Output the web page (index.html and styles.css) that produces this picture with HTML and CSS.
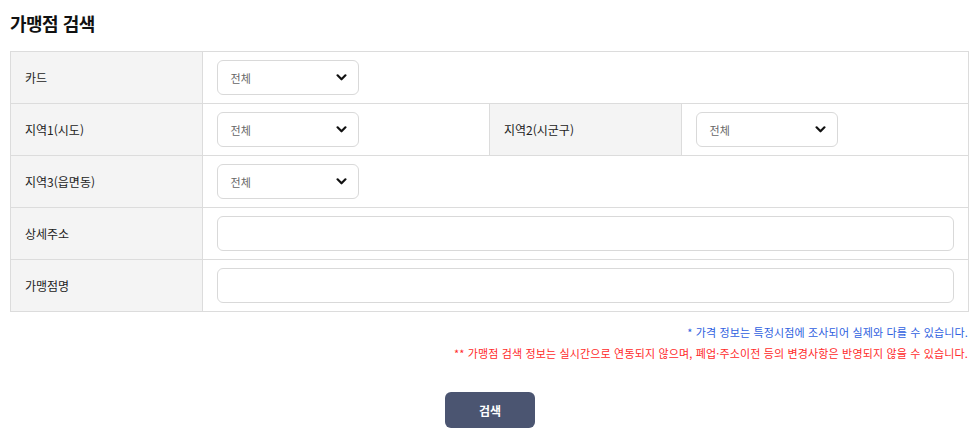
FILE: index.html
```html
<!DOCTYPE html>
<html lang="ko">
<head>
<meta charset="utf-8">
<link rel="stylesheet" href="styles.css">
</head>
<body>
<div class="page">
  <h2 class="title">가맹점 검색</h2>
  <table class="form">
    <colgroup><col class="c-lab"><col class="c-val"><col class="c-lab2"><col class="c-val"></colgroup>
    <tr>
      <th>카드</th>
      <td colspan="3"><div class="select"><span>전체</span><svg class="chev" viewBox="0 0 12 8" width="11" height="7"><path d="M1.5 1.5 L6 6 L10.5 1.5" fill="none" stroke="#111" stroke-width="2.5" stroke-linecap="round" stroke-linejoin="round"/></svg></div></td>
    </tr>
    <tr>
      <th>지역1(시도)</th>
      <td><div class="select"><span>전체</span><svg class="chev" viewBox="0 0 12 8" width="11" height="7"><path d="M1.5 1.5 L6 6 L10.5 1.5" fill="none" stroke="#111" stroke-width="2.5" stroke-linecap="round" stroke-linejoin="round"/></svg></div></td>
      <th>지역2(시군구)</th>
      <td><div class="select"><span>전체</span><svg class="chev" viewBox="0 0 12 8" width="11" height="7"><path d="M1.5 1.5 L6 6 L10.5 1.5" fill="none" stroke="#111" stroke-width="2.5" stroke-linecap="round" stroke-linejoin="round"/></svg></div></td>
    </tr>
    <tr>
      <th>지역3(읍면동)</th>
      <td colspan="3"><div class="select"><span>전체</span><svg class="chev" viewBox="0 0 12 8" width="11" height="7"><path d="M1.5 1.5 L6 6 L10.5 1.5" fill="none" stroke="#111" stroke-width="2.5" stroke-linecap="round" stroke-linejoin="round"/></svg></div></td>
    </tr>
    <tr>
      <th>상세주소</th>
      <td colspan="3"><div class="input"></div></td>
    </tr>
    <tr>
      <th>가맹점명</th>
      <td colspan="3"><div class="input"></div></td>
    </tr>
  </table>
  <p class="note blue">* 가격 정보는 특정시점에 조사되어 실제와 다를 수 있습니다.</p>
  <p class="note red">** 가맹점 검색 정보는 실시간으로 연동되지 않으며, 폐업·주소이전 등의 변경사항은 반영되지 않을 수 있습니다.</p>
  <div class="actions"><button class="btn">검색</button></div>
</div>
</body>
</html>
```
FILE: styles.css
```css
html, body { margin: 0; padding: 0; background: #fff; }
body { font-family: "Noto Sans CJK KR", "Noto Sans", sans-serif; color: #222; }
.page { padding: 0 9px 0 10px; }
.title { margin: 0; padding-top: 10px; height: 51px; box-sizing: border-box; font-size: 18px; font-weight: 700; line-height: 26px; color: #111; letter-spacing: -0.5px; }
.form { width: 100%; border-collapse: collapse; table-layout: fixed; }
.c-lab { width: 20%; }
.c-lab2 { width: 20%; }
.c-val { width: 30%; }
.form th, .form td { border: 1px solid #dcdcdc; height: 52px; box-sizing: border-box; padding: 0 14px; vertical-align: middle; }
.form th { background: #f4f4f4; text-align: left; font-weight: 400; font-size: 12px; color: #222; padding-left: 14px; }
.select { width: 142px; height: 35px; box-sizing: border-box; border: 1px solid #d9d9d9; border-radius: 6px; display: flex; align-items: center; justify-content: space-between; padding: 0 11px 0 13px; font-size: 11px; color: #666; }
.chev { display: block; }
.input { height: 35px; box-sizing: border-box; border: 1px solid #d9d9d9; border-radius: 6px; }
.note { margin: 0; text-align: right; font-size: 11px; line-height: 21px; padding-right: 1px; letter-spacing: 0.15px; }
.note.blue { color: #2f5fe0; margin-top: 10px; }
.note.red { color: #ff2a2a; }
.actions { display: flex; justify-content: center; margin-top: 28px; padding-left: 1px; }
.btn { width: 90px; height: 36px; border: 0; border-radius: 6px; background: #4b5571; color: #fff; font-family: inherit; font-size: 12px; font-weight: 700; }
```
